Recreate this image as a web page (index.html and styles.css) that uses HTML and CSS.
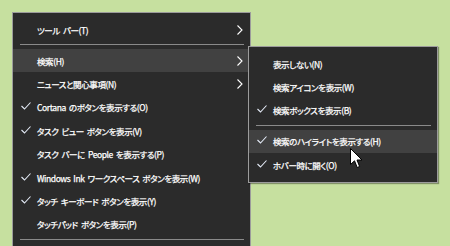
FILE: index.html
```html
<!DOCTYPE html>
<html lang="ja">
<head>
    <meta charset="UTF-8">
    <title>タスクバー メニュー</title>
    <link rel="stylesheet" href="styles.css">
</head>
<body>
<div class="desk">
    <div class="menu main-menu">
        <div class="item"><span class="mark"></span><span class="label">ツール バー(T)</span><svg class="arrow" width="6" height="10" viewBox="0 0 6 10"><polyline points="0.5,0.5 5,5 0.5,9.5"/></svg></div>
        <div class="sep"></div>
        <div class="item hot"><span class="mark"></span><span class="label">検索(H)</span><svg class="arrow" width="6" height="10" viewBox="0 0 6 10"><polyline points="0.5,0.5 5,5 0.5,9.5"/></svg></div>
        <div class="item"><span class="mark"></span><span class="label">ニュースと関心事項(N)</span><svg class="arrow" width="6" height="10" viewBox="0 0 6 10"><polyline points="0.5,0.5 5,5 0.5,9.5"/></svg></div>
        <div class="item"><span class="mark"><svg width="10" height="8" viewBox="0 0 10 8"><polyline points="0.5,4 3.5,7 9.5,0.5"/></svg></span><span class="label">Cortana のボタンを表示する(O)</span></div>
        <div class="item"><span class="mark"><svg width="10" height="8" viewBox="0 0 10 8"><polyline points="0.5,4 3.5,7 9.5,0.5"/></svg></span><span class="label">タスク ビュー ボタンを表示(V)</span></div>
        <div class="item"><span class="mark"></span><span class="label">タスク バーに People を表示する(P)</span></div>
        <div class="item"><span class="mark"><svg width="10" height="8" viewBox="0 0 10 8"><polyline points="0.5,4 3.5,7 9.5,0.5"/></svg></span><span class="label">Windows Ink ワークスペース ボタンを表示(W)</span></div>
        <div class="item"><span class="mark"><svg width="10" height="8" viewBox="0 0 10 8"><polyline points="0.5,4 3.5,7 9.5,0.5"/></svg></span><span class="label">タッチ キーボード ボタンを表示(Y)</span></div>
        <div class="item"><span class="mark"></span><span class="label">タッチパッド ボタンを表示(P)</span></div>
        <div class="sep"></div>
    </div>

    <!-- 検索のサブメニュー -->
    <div class="menu sub-menu">
        <div class="item"><span class="mark"></span><span class="label">表示しない(N)</span></div>
        <div class="item"><span class="mark"></span><span class="label">検索アイコンを表示(W)</span></div>
        <div class="item"><span class="mark"><svg width="10" height="8" viewBox="0 0 10 8"><polyline points="0.5,4 3.5,7 9.5,0.5"/></svg></span><span class="label">検索ボックスを表示(B)</span></div>
        <div class="sep"></div>
        <div class="item hot"><span class="mark"><svg width="10" height="8" viewBox="0 0 10 8"><polyline points="0.5,4 3.5,7 9.5,0.5"/></svg></span><span class="label">検索のハイライトを表示する(H)</span></div>
        <div class="item"><span class="mark"><svg width="10" height="8" viewBox="0 0 10 8"><polyline points="0.5,4 3.5,7 9.5,0.5"/></svg></span><span class="label">ホバー時に開く(O)</span></div>
    </div>

    <svg class="cursor" width="13" height="21" viewBox="0 0 13 21"><path d="M0.5,0.5 L0.5,16.5 L4.5,12.8 L7.2,19.5 L9.6,18.5 L7,12 L12,12 Z"/></svg>
</div>
</body>
</html>
```

FILE: styles.css
```css
html, body { margin: 0; padding: 0; }
body { background-color: #c6e09f; font-family: "Noto Sans CJK JP", "Noto Sans", sans-serif; font-size: 8.5px; color: #fff; }
.desk { position: relative; width: 450px; height: 246px; overflow: hidden; }

.menu { background: #2b2b2b; border: 1px solid #9c9c9c; box-sizing: border-box; padding: 5px 0; }
.main-menu { width: 239px; height: 260px; margin: 12px 0 0 12px; }
/* サブメニューはメインメニューの上に重なる */
.sub-menu { position: absolute; left: 248px; top: 46px; width: 190px; height: 137px; box-shadow: 1px 1px 1px rgba(0,0,0,0.35); }

.item { display: flex; align-items: center; height: 23.4px; }
.item.hot { background: #414141; }
.mark { width: 24px; flex: none; display: flex; align-items: center; padding-left: 8px; box-sizing: border-box; margin-top: -2px; }
.mark polyline { fill: none; stroke: #e4ebf7; stroke-width: 1.1; }
.label { flex: 1; white-space: nowrap; font-feature-settings: "palt"; letter-spacing: -0.4px; word-spacing: 1.5px; -webkit-text-stroke: 0.25px #fff; }
.arrow { flex: none; margin-right: 7px; }
.arrow polyline { fill: none; stroke: #fff; stroke-width: 1.1; }

.sep { height: 1px; background: #8a8a8a; margin: 3px 6px 3.5px 7px; }

.cursor { position: absolute; left: 350px; top: 148px; }
.cursor path { fill: #fff; stroke: #000; stroke-width: 1; stroke-linejoin: miter; }
```
